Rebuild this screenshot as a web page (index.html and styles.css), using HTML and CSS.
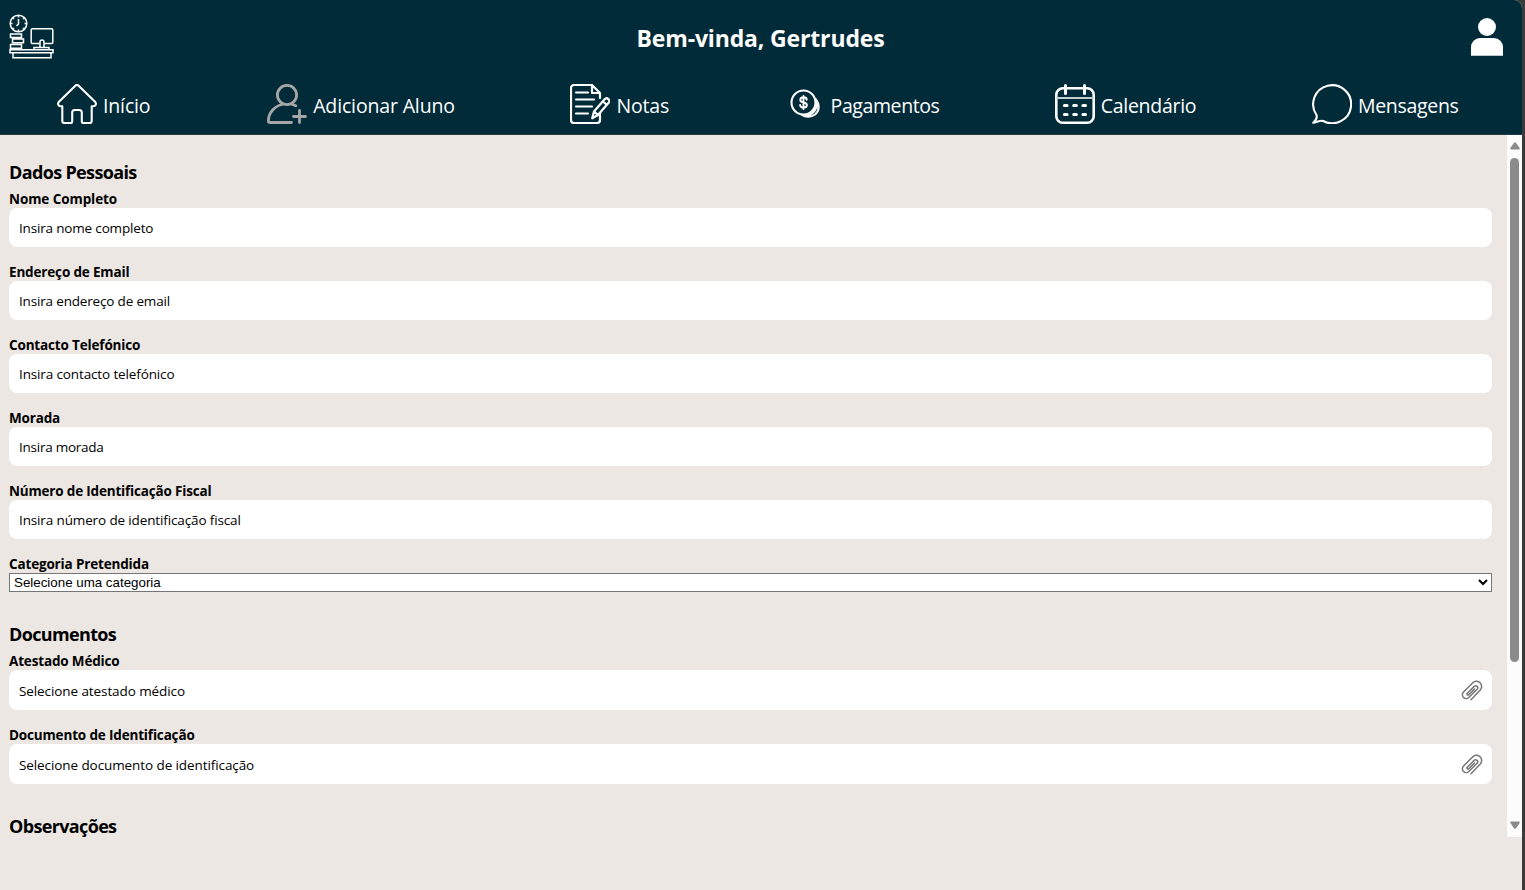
FILE: index.html
```html
<!DOCTYPE html>
<html lang="pt">
<head>
<meta charset="utf-8">
<title>Adicionar Aluno</title>
<link rel="stylesheet" href="styles.css">
</head>
<body>
<div class="window">
  <header class="header">
    <div class="topbar">
      <svg class="logo" viewBox="0 0 46 46" fill="none" stroke="#fff" stroke-width="1.5">
        <circle cx="9.500" cy="9.500" r="8.300"/>
        <path d="M9.500 5v5l-2 2M9.500 1.500v2M9.500 15.500v2M1.500 9.500h2M15.500 9.500h2M4 4l1 1M15 4l-1 1M4 15l1-1M15 15l-1-1"/>
        <path d="M1.500 20h11v3.600h-11zM3.500 25h11v3.800h-11zM1.500 30.500h11v3.800h-11zM1 35.700h43v3H1zM4 38.700v5h38v-5M25 35.500v-2h15v2"/>
        <path d="M31 29.500h-7.500a1.300 1.300 0 0 1-1.300-1.300V16a1.300 1.300 0 0 1 1.300-1.300H42.500a1.300 1.300 0 0 1 1.300 1.300v12.200a1.300 1.300 0 0 1-1.300 1.300h-7.500M31 33.500V28a2 2 0 0 1 4 0v5.500"/>
      </svg>
      <h1 class="welcome">Bem-vinda, Gertrudes</h1>
      <svg class="avatar" viewBox="0 0 34 38" fill="#fff"><circle cx="17" cy="9" r="9"/><path d="M1 37.700V29a9 9 0 0 1 9-9h14a9 9 0 0 1 9 9v8.700z"/></svg>
    </div>
    <nav class="nav">
      <a class="item"><svg class="icon" viewBox="0 0 40 40" fill="none" stroke="#fff" stroke-width="2.100" stroke-linejoin="round"><path d="M18.600 1.600 1.700 18.100C.3 20 1.500 22.200 3.500 22.200h1.800V37c0 1.500.7 2.100 2 2.100h6.200c1.200 0 1.700-.6 1.700-1.700V28.600c0-1.700 1-2.600 2.500-2.600h4.600c1.500 0 2.500.9 2.500 2.600v8.800c0 1.100.5 1.700 1.700 1.700h6.200c1.300 0 2-.6 2-2.100V22.200h1.800c2 0 3.200-2.200 1.800-4.100L21.400 1.600a2 2 0 0 0-2.800 0z"/></svg><span class="label home">Início</span></a>
      <a class="item"><svg class="icon" viewBox="0 0 40 40" fill="none" stroke="#a6a6a6" stroke-width="2.800" stroke-linecap="round"><circle cx="20" cy="11" r="9.600"/><path d="M15 20.500C7 22.500 1.400 29 1.400 37c0 1 .6 1.500 1.500 1.500H24.500M25.500 20.500l3.300 1.300M32.500 26.500v12M26.500 32.500h12"/></svg><span class="label add">Adicionar Aluno</span></a>
      <a class="item"><svg class="icon" viewBox="0 0 40 40" fill="none" stroke="#fff" stroke-width="2.200" stroke-linecap="round" stroke-linejoin="round"><path d="M30 14V9l-8-8H4a3 3 0 0 0-3 3v32a3 3 0 0 0 3 3h23a3 3 0 0 0 3-3v-7M22 1.500V9h7.500M6 8.500h12M6 15.500h18M6 22.500h16M6 29.500h12"/><path d="m24 27.500 10.600-12.200a2.600 2.600 0 0 1 4 3.500L28 31l-5.800 3.300zM24 27.500l4 3.500M33 17.500l3.700 3.300"/></svg><span class="label notes">Notas</span></a>
      <a class="item"><svg class="icon" viewBox="0 0 40 40" fill="none" stroke="#fff" stroke-width="2.100" stroke-linecap="round"><circle cx="18.500" cy="18.500" r="12"/><path d="M30.500 15c4.500 5.500 4 12-.5 15.500-4 3-9.500 3-13 .5M32 19.500c0 6.500-5.500 12.200-12 12.200"/><path stroke-width="1.900" d="M21.700 15.800c0-1.700-1.400-2.500-3.200-2.500s-3.200 1-3.200 2.600c0 3.700 6.600 1.600 6.600 5.200 0 1.600-1.400 2.600-3.300 2.600-2 0-3.500-1-3.500-2.700M18.500 12v13"/></svg><span class="label pay">Pagamentos</span></a>
      <a class="item"><svg class="icon" viewBox="0 0 40 40" fill="none" stroke="#fff" stroke-width="2.600" stroke-linecap="round"><rect x="1.300" y="4.200" width="37.400" height="34.500" rx="6.500"/><path stroke-width="3" d="M10.500 1.500v8M29.500 1.500v8"/><path stroke="#c4cdd0" stroke-width="2" d="M2 14h36"/><path stroke-width="3.200" d="M9.500 21.500H12M18.800 21.500h2.500M28 21.500h2.500M9.500 30.500H12M18.800 30.500h2.500M28 30.500h2.500"/></svg><span class="label cal">Calendário</span></a>
      <a class="item"><svg class="icon" viewBox="0 0 40 40" fill="none" stroke="#fff" stroke-width="2.100" stroke-linejoin="round"><path d="M1.200 38.800c3-2.300 4.100-4.800 3.300-7.800A19 19 0 1 1 11.200 37c-2.700-1-6.500 1.300-10 1.800z"/></svg><span class="label msg">Mensagens</span></a>
    </nav>
  </header>
  <div class="viewport">
    <main class="form">
      <h2 class="section">Dados Pessoais</h2>
      <div class="field"><label class="name n1">Nome Completo</label><div class="box b1">Insira nome completo</div></div>
      <div class="field"><label class="name">Endereço de Email</label><div class="box b2">Insira endereço de email</div></div>
      <div class="field"><label class="name">Contacto Telefónico</label><div class="box">Insira contacto telefónico</div></div>
      <div class="field"><label class="name">Morada</label><div class="box b4">Insira morada</div></div>
      <div class="field"><label class="name n5">Número de Identificação Fiscal</label><div class="box">Insira número de identificação fiscal</div></div>
      <div class="field pick"><label class="name">Categoria Pretendida</label><select class="select"><option>Selecione uma categoria</option></select></div>
      <h2 class="section docs">Documentos</h2>
      <div class="field file"><label class="name">Atestado Médico</label><div class="box"><span>Selecione atestado médico</span><svg class="clip" viewBox="0 0 22 22"><use href="#clip"/></svg></div></div>
      <div class="field file"><label class="name">Documento de Identificação</label><div class="box"><span>Selecione documento de identificação</span><svg class="clip" viewBox="0 0 22 22"><g id="clip" fill="none" stroke="#777" stroke-width="1.500" stroke-linecap="round"><path d="M6.300 13.200l6.900-6.800a2 2 0 0 1 2.900 2.900l-8 7.900a3.700 3.700 0 0 1-5.800-5l9-8.900a5 5 0 0 1 8.200 6.500L10 19.800"/><path d="M6.300 13.200a1 1 0 0 0 1.500 1.500l5.700-5.600"/></g></svg></div></div>
      <h2 class="section obs">Observações</h2>
    </main>
    <div class="scrollbar">
      <svg class="arrow" viewBox="0 0 10 8"><path d="M4 .8Q5-.3 6 .8L9.600 6q.6 1.500-.8 1.500H1.200Q-.2 7.500.4 6z"/></svg>
      <div class="thumb"></div>
      <svg class="arrow down" viewBox="0 0 10 8"><path d="M4 .8Q5-.3 6 .8L9.600 6q.6 1.500-.8 1.500H1.200Q-.2 7.500.4 6z"/></svg>
    </div>
  </div>
</div>
</body>
</html>
```
FILE: styles.css
```css
* { box-sizing: border-box; }
body { margin: 0; height: 890px; overflow: hidden; background: #3a3a3a; font-family: "Open Sans", "Noto Sans", sans-serif; color: #000; }
.window { width: 1522px; height: 890px; background: #ece7e3; border-top-right-radius: 8px; overflow: hidden; }
.header { height: 135px; background: #012b39; border-bottom: 1px solid #1f3d47; color: #fff; }
.topbar { height: 76px; padding: 0 18px 0 9px; display: grid; grid-template-columns: 46px 1fr 34px; align-items: center; }
.logo { width: 46px; height: 46px; margin-top: -2px; }
.welcome { margin: 0; font-size: 23px; line-height: 32px; font-weight: 700; text-align: center; letter-spacing: -0.15px; padding-right: 4px; }
.avatar { width: 34px; height: 38px; margin-top: -2px; }
.nav { display: flex; justify-content: space-between; padding: 8px 63px 0 57px; }
.item { display: flex; gap: 6px; align-items: center; height: 40px; }
.icon { width: 40px; height: 40px; flex: none; }
.label { font-size: 19.500px; line-height: 28px; white-space: nowrap; margin-top: 4px; letter-spacing: -0.15px; }
.home { width: 49px; }
.add { width: 142px; }
.notes { width: 53px; }
.pay { width: 109px; letter-spacing: -0.4px; }
.cal { width: 96px; letter-spacing: -0.28px; }
.msg { width: 101px; letter-spacing: -0.3px; }
.viewport { display: flex; height: 702px; overflow: hidden; }
.form { flex: 1; padding: 25px 15px 0 9px; }
.section { margin: 0 0 5px; font-size: 18px; line-height: 25px; font-weight: 700; letter-spacing: -0.65px; }
.docs { margin-top: 30px; }
.field { display: flex; flex-direction: column; align-items: stretch; height: 73px; }
.name { display: block; height: 18px; font-size: 13.500px; line-height: 19px; font-weight: 700; white-space: nowrap; letter-spacing: -0.16px; }
.n1 { letter-spacing: -0.08px; }
.n5 { letter-spacing: -0.18px; }
.box { height: 39px; border-radius: 8px; background: #fff; padding: 1px 9px 0 10px; font-size: 13.500px; letter-spacing: -0.13px; display: flex; align-items: center; justify-content: space-between; }
.b1, .b2 { letter-spacing: -0.17px; }
.b4 { letter-spacing: -0.25px; }
.pick { height: 37px; }
.select { width: 100%; height: 19px; font: 13.333px "Liberation Sans", Arial, sans-serif; color: #000; background: #fff; border: 1px solid #767676; border-radius: 0; padding: 0; }
.file { height: 74px; }
.file .box { height: 40px; letter-spacing: -0.09px; }
.file + .obs { margin-top: 14px; }
.clip { width: 22px; height: 22px; }
.scrollbar { width: 15px; background: #fcfcfc; display: flex; flex-direction: column; align-items: center; padding: 7px 0 8px; }
.arrow { width: 10px; height: 8px; fill: #8b8b8b; }
.thumb { width: 9px; height: 504px; border-radius: 5px; background: #8b8b8b; margin-top: 8px; }
.down { margin-top: auto; transform: rotate(180deg); }
```
